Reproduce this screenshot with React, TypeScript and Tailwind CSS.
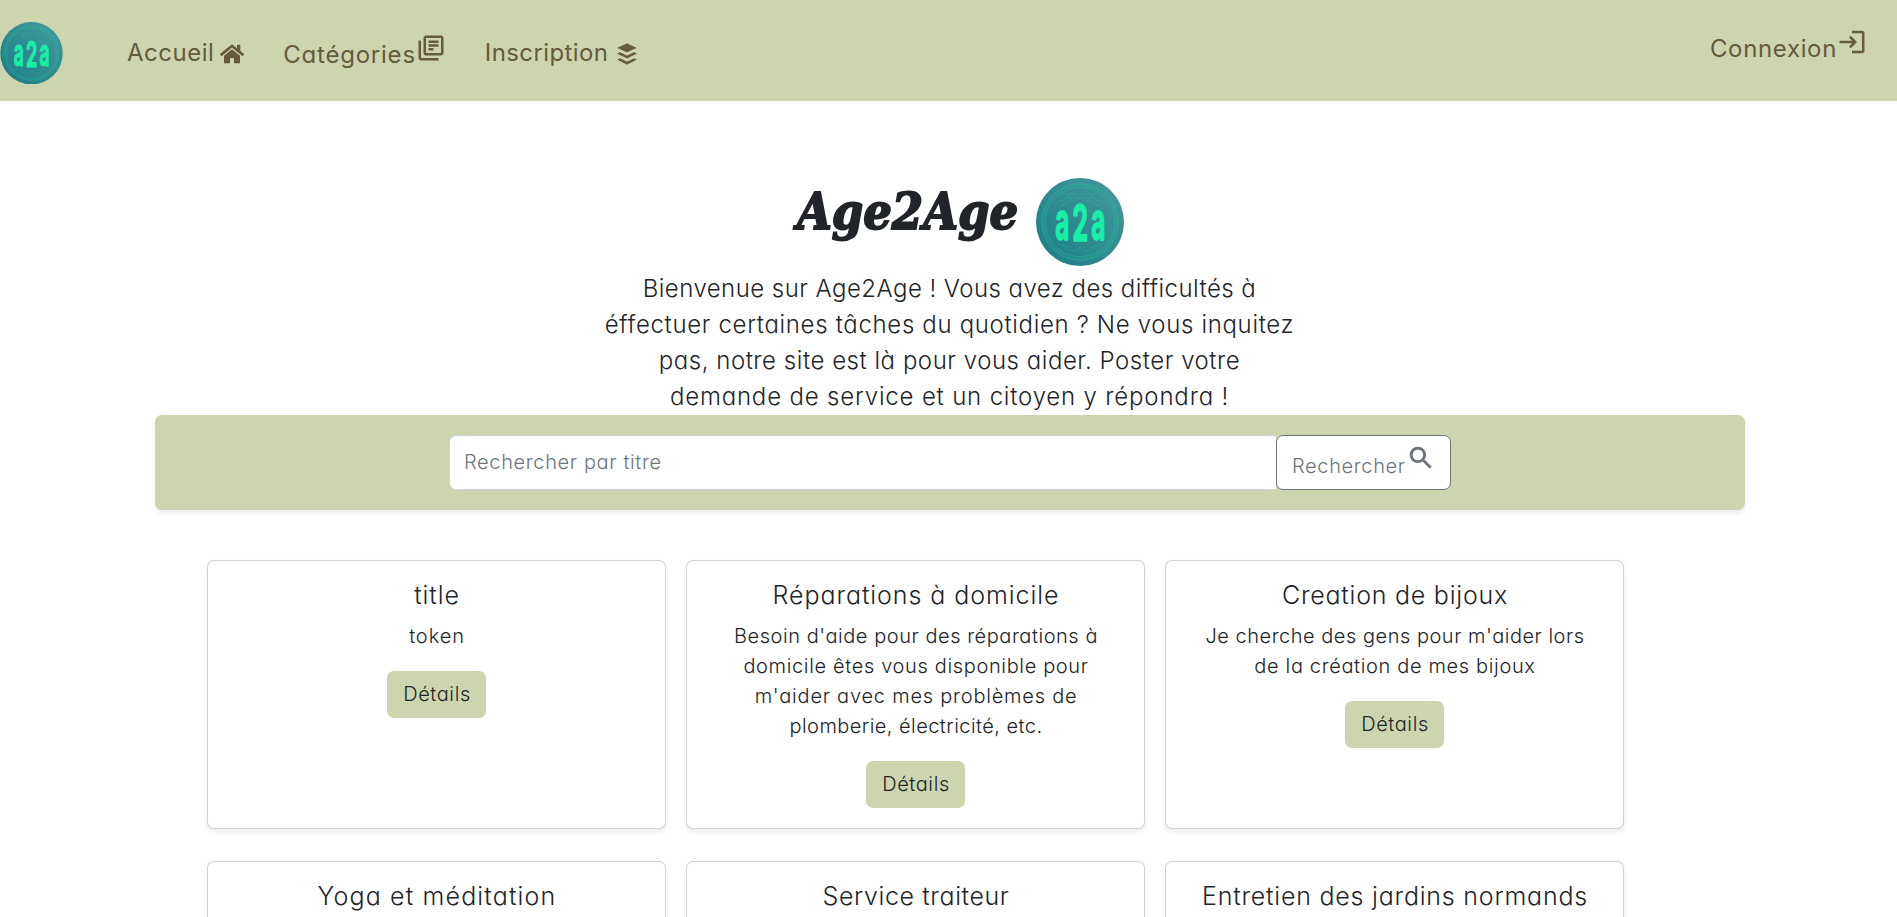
import type { ReactNode } from "react";
import { FaBuffer, FaHome } from "react-icons/fa";
import { MdLogin, MdOutlineLibraryBooks } from "react-icons/md";

type Line = { text: string; tracking: string };
type Service = { title: Line; body?: Line[] };

const intro: Line[] = [
  { text: "Bienvenue sur Age2Age ! Vous avez des difficultés à", tracking: "tracking-[0.453px]" },
  { text: "éffectuer certaines tâches du quotidien ? Ne vous inquitez", tracking: "tracking-[0.667px]" },
  { text: "pas, notre site est là pour vous aider. Poster votre", tracking: "tracking-[0.535px]" },
  { text: "demande de service et un citoyen y répondra !", tracking: "tracking-[0.82px]" },
];

const services: Service[] = [
  {
    title: { text: "title", tracking: "tracking-[0.9px]" },
    body: [{ text: "token", tracking: "tracking-[0.9px]" }],
  },
  {
    title: { text: "Réparations à domicile", tracking: "tracking-[0.94px]" },
    body: [
      { text: "Besoin d'aide pour des réparations à", tracking: "tracking-[0.55px]" },
      { text: "domicile êtes vous disponible pour", tracking: "tracking-[0.65px]" },
      { text: "m'aider avec mes problèmes de", tracking: "tracking-[0.78px]" },
      { text: "plomberie, électricité, etc.", tracking: "tracking-[0.45px]" },
    ],
  },
  {
    title: { text: "Creation de bijoux", tracking: "tracking-[0.76px]" },
    body: [
      { text: "Je cherche des gens pour m'aider lors", tracking: "tracking-[0.52px]" },
      { text: "de la création de mes bijoux", tracking: "tracking-[0.65px]" },
    ],
  },
  { title: { text: "Yoga et méditation", tracking: "tracking-[1.16px]" } },
  { title: { text: "Service traiteur", tracking: "tracking-[0.6px]" } },
  { title: { text: "Entretien des jardins normands", tracking: "tracking-[0.78px]" } },
];

function Logo({ className, id }: { className: string; id: string }) {
  return (
    <svg viewBox="0 0 88 88" className={className} role="img" aria-label="a2a">
      <defs>
        <linearGradient id={id} x1="0.1" y1="0.85" x2="0.85" y2="0.1">
          <stop offset="0" stopColor="#217f89" />
          <stop offset="1" stopColor="#42959b" />
        </linearGradient>
      </defs>
      <circle cx="44" cy="44" r="44" fill={`url(#${id})`} />
      <g fill="none" stroke="#1fcb9b">
        <circle cx="44" cy="44" r="38.2" strokeWidth="0.8" opacity="0.7" />
        <circle cx="44" cy="44" r="36.5" strokeWidth="0.6" opacity="0.6" />
        <circle cx="44" cy="44" r="34.6" strokeWidth="0.7" opacity="0.65" />
        <g strokeWidth="0.7" opacity="0.55">
          <path d="M30 17q7-3 11-1l3 3 3-3q4-2 11 1" />
          <path d="M33 20q6-1 11 1q5-2 11-1" />
          <path d="M20 28q-1-4 3-5q5 0 7-3q4-2 5 1q0 3-4 3q-2 4-7 4" />
          <path d="M68 28q1-4-3-5q-5 0-7-3q-4-2-5 1q0 3 4 3q2 4 7 4" />
          <path d="M30 71q7 3 11 1l3-3 3 3q4 2 11-1" />
          <path d="M21 64q1 3 5 3q4 1 6 3M67 64q-1 3-5 3q-4 1-6 3" />
        </g>
      </g>
      <g
        fill="#17f0a5"
        stroke="#17f0a5"
        strokeWidth="1.4"
        className="font-['Inter',sans-serif] font-bold [font-feature-settings:normal]"
        textAnchor="middle"
      >
        <text transform="translate(26.2 62.3) scale(.46 1)" fontSize="53">a</text>
        <text transform="translate(44.2 62.8) scale(.5 1)" fontSize="50.5">2</text>
        <text transform="translate(62.4 62.3) scale(.46 1)" fontSize="53">a</text>
      </g>
    </svg>
  );
}

function SearchIcon({ className }: { className: string }) {
  return (
    <svg viewBox="0 0 24 24" fill="none" stroke="currentColor" strokeWidth="2.3" className={className}>
      <circle cx="9.5" cy="9.5" r="5.4" />
      <path d="M14 14l5.8 5.8" />
    </svg>
  );
}

function NavLink({ children, className }: { children: ReactNode; className: string }) {
  return (
    <a href="#" className={`flex items-center text-2xl leading-9 font-normal whitespace-nowrap ${className}`}>
      {children}
    </a>
  );
}

function ServiceCard({ title, body }: Service) {
  return (
    <article className="flex min-h-[269px] flex-col items-center rounded-[7px] border border-black/[0.175] bg-white px-5 pt-[19px] pb-5 text-center shadow-[0_2.5px_5px_rgba(0,0,0,0.075)]">
      <h5 className={`mb-[11px] pl-px text-[25px] leading-[30px] ${title.tracking}`}>{title.text}</h5>
      {body && (
        <>
          <p className="mb-5 pl-px text-xl leading-[30px]">
            {body.map((line) => (
              <span key={line.text} className={`block whitespace-nowrap ${line.tracking}`}>
                {line.text}
              </span>
            ))}
          </p>
          <a
            href="#"
            className="flex h-[47px] w-[99px] items-center justify-center rounded-[7px] bg-[#ccd5ae] pb-0.5 pl-px text-xl tracking-[0.6px]"
          >
            Détails
          </a>
        </>
      )}
    </article>
  );
}

export default function App() {
  return (
    <div className="h-[917px] overflow-hidden bg-white font-['Inter',sans-serif] font-light text-[#212529] [font-feature-settings:'cv11']">
      <nav className="flex h-[101px] items-start bg-[#ccd5ae] text-[#665a3f]">
        <Logo id="nav-logo" className="mt-[21.5px] h-[62.5px] w-[63px]" />
        <NavLink className="mt-[35px] ml-16 gap-1.5 tracking-[0.5px]">
          Accueil <FaHome className="mt-0.5 size-6" />
        </NavLink>
        <NavLink className="mt-[37px] ml-[39px] tracking-[0.77px]">
          Catégories
          <MdOutlineLibraryBooks className="-mt-3.5 size-[30px]" />
        </NavLink>
        <NavLink className="mt-[35px] ml-[39px] gap-[7px] tracking-[0.4px]">
          Inscription <FaBuffer className="mt-0.5 size-6" />
        </NavLink>
        <NavLink className="mt-[31px] mr-[30px] ml-auto tracking-[0.65px]">
          Connexion
          <MdLogin className="-mt-3.5 size-[30px]" />
        </NavLink>
      </nav>

      <main>
        <header className="flex h-[170px] items-start justify-center gap-[18px] pt-[77px] pl-[24px]">
          <h1 className="mt-1 text-[50px] leading-[60px] font-bold whitespace-nowrap italic [-webkit-text-stroke:1.8px_#212529] [font-family:'DejaVu_Serif_Condensed','DejaVu_Serif',serif]">
            Age2Age
          </h1>
          <Logo id="hero-logo" className="size-[88px]" />
        </header>

        <p className="pl-[2px] text-center text-2xl leading-9">
          {intro.map((line) => (
            <span key={line.text} className={`block ${line.tracking}`}>
              {line.text}
            </span>
          ))}
        </p>

        <form className="ml-[155px] flex h-[95px] w-[1590px] items-center rounded-[7px] bg-[#ccd5ae] pl-[294px] text-xl shadow-[0_2.5px_5px_rgba(0,0,0,0.075)]">
          <input
            type="text"
            placeholder="Rechercher par titre"
            className="h-[55px] w-[827px] rounded-l-[7px] border border-r-0 border-[#ced4da] bg-white px-3.5 pb-0.5 tracking-[0.65px] placeholder:text-[#6c757d]"
          />
          <button
            type="button"
            className="flex h-[55px] w-[175px] items-center rounded-[7px] border border-[#6c757d] bg-white pl-[15px] tracking-[0.65px] text-[#6c757d]"
          >
            <span className="mt-[7px]">Rechercher</span>
            <SearchIcon className="-mt-2.5 size-[30px]" />
          </button>
        </form>

        <section className="mt-[50px] ml-[207px] grid w-[1417px] grid-cols-3 gap-x-5 gap-y-8">
          {services.map((service) => (
            <ServiceCard key={service.title.text} {...service} />
          ))}
        </section>
      </main>
    </div>
  );
}
